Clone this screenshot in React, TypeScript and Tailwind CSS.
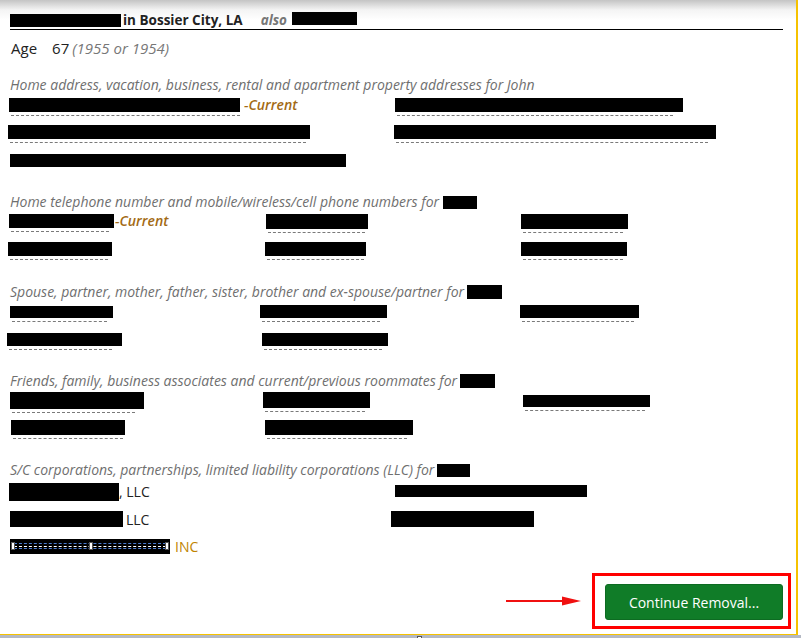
import React from "react";

type Cell = {
  w: string;
  h: string;
  uw?: string;
  ml?: string;
  suffix?: React.ReactNode;
};

const current = (
  <span className="italic font-semibold text-[14px] leading-[14px] text-[#a36a14] ml-[1px]">-Current</span>
);

const FONT = { fontFamily: '"Open Sans", "Noto Sans", Arial, sans-serif' };

function Black({ w, h }: { w: string; h: string }) {
  return <span className={`inline-block bg-black ${w} ${h}`} />;
}

function Item({ cell, pitch }: { cell: Cell; pitch: string }) {
  return (
    <div className={`flex flex-col items-start ${pitch} ${cell.ml ?? ""}`}>
      <div className={`flex items-center ${cell.h}`}>
        <Black w={cell.w} h={cell.h} />
        {cell.suffix}
      </div>
      {cell.uw && (
        <div className={`mt-[3px] ml-[2px] border-t border-dashed border-[#7a7a7a] ${cell.uw}`} />
      )}
    </div>
  );
}

function Heading({ children }: { children: React.ReactNode }) {
  return (
    <p className="flex items-center h-[18px] italic text-[14px] leading-[18px] text-[#6f6f6f]">
      {children}
    </p>
  );
}

const phone: Cell[] = [
  { w: "w-[105px]", h: "h-[14px]", uw: "w-[98px]", ml: "-ml-[1px]", suffix: current },
  { w: "w-[102px]", h: "h-[15px]", uw: "w-[97px]" },
  { w: "w-[107px]", h: "h-[15px]", uw: "w-[100px]" },
  { w: "w-[104px]", h: "h-[14px]", uw: "w-[98px]", ml: "-ml-[2px]" },
  { w: "w-[101px]", h: "h-[14px]", uw: "w-[97px]", ml: "-ml-[1px]" },
  { w: "w-[106px]", h: "h-[14px]", uw: "w-[100px]" },
];

const spouse: Cell[] = [
  { w: "w-[103px]", h: "h-[12px]", uw: "w-[95px]", ml: "pt-[1px]" },
  { w: "w-[127px]", h: "h-[13px]", uw: "w-[118px]" },
  { w: "w-[119px]", h: "h-[13px]", uw: "w-[112px]" },
  { w: "w-[115px]", h: "h-[13px]", uw: "w-[103px]", ml: "-ml-[3px]" },
  { w: "w-[126px]", h: "h-[13px]", uw: "w-[118px]", ml: "ml-[2px]" },
];

const friends: Cell[] = [
  { w: "w-[134px]", h: "h-[17px]", uw: "w-[123px]" },
  { w: "w-[107px]", h: "h-[16px]", uw: "w-[100px]" },
  { w: "w-[127px]", h: "h-[12px]", uw: "w-[120px]", ml: "pt-[3px]" },
  { w: "w-[114px]", h: "h-[15px]", uw: "w-[110px]", ml: "ml-[1px]" },
  { w: "w-[148px]", h: "h-[15px]", uw: "w-[140px]", ml: "ml-[2px]" },
];

export default function App() {
  return (
    <div className="w-[801px] h-[638px] bg-white overflow-hidden text-[#222]" style={FONT}>
      <div className="w-[798px] h-[635px] flex flex-col border-r-2 border-b border-[#f6c200] bg-[linear-gradient(to_bottom,#c4c4c4_0px,#f4f4f4_10px,#ffffff_20px)] pl-[10px] pr-[13px]">
        {/* Header */}
        <div className="mt-[11px] h-[19px] flex items-center border-b border-black text-[13.5px] font-bold">
          <Black w="w-[111px]" h="h-[13px]" />
          <span className="ml-[2px]">in Bossier City, LA</span>
          <span className="ml-[18px] italic text-[#777]">also</span>
          <span className="ml-[5px]">
            <Black w="w-[65px]" h="h-[13px]" />
          </span>
        </div>

        {/* Age */}
        <div className="mt-[8px] h-[20px] flex items-center text-[15px] leading-[20px]">
          <span className="ml-[1px]">Age</span>
          <span className="ml-[15px]">67</span>
          <span className="ml-[3px] italic text-[#777]">(1955 or 1954)</span>
        </div>

        {/* Addresses */}
        <div className="mt-[18px]">
          <Heading>
            Home address, vacation, business, rental and apartment property addresses for John
          </Heading>
          <div className="mt-[4px] grid grid-cols-[385px_1fr]">
            <Item pitch="h-[27px]" cell={{ w: "w-[231px]", h: "h-[14px]", uw: "w-[229px]", ml: "-ml-[1px]", suffix: <span className="ml-[3px] flex">{current}</span> }} />
            <Item pitch="h-[27px]" cell={{ w: "w-[288px]", h: "h-[14px]", uw: "w-[276px]" }} />
            <Item pitch="h-[29px]" cell={{ w: "w-[302px]", h: "h-[14px]", uw: "w-[296px]", ml: "-ml-[2px]" }} />
            <Item pitch="h-[29px]" cell={{ w: "w-[322px]", h: "h-[14px]", uw: "w-[312px]", ml: "-ml-[1px]" }} />
            <Item pitch="h-[27px]" cell={{ w: "w-[336px]", h: "h-[13px]" }} />
          </div>
        </div>

        {/* Phones */}
        <div className="mt-[12px]">
          <Heading>
            Home telephone number and mobile/wireless/cell phone numbers for
            <span className="ml-[4px] flex">
              <Black w="w-[34px]" h="h-[13px]" />
            </span>
          </Heading>
          <div className="mt-[3px] grid grid-cols-[256px_255px_1fr]">
            {phone.map((c, i) => (
              <Item key={i} pitch="h-[28px]" cell={c} />
            ))}
          </div>
        </div>

        {/* Relatives */}
        <div className="mt-[13px]">
          <Heading>
            Spouse, partner, mother, father, sister, brother and ex-spouse/partner for
            <span className="ml-[3px] flex">
              <Black w="w-[35px]" h="h-[14px]" />
            </span>
          </Heading>
          <div className="mt-[4px] grid grid-cols-[250px_260px_1fr]">
            {spouse.map((c, i) => (
              <Item key={i} pitch="h-[28px]" cell={c} />
            ))}
          </div>
        </div>

        {/* Associates */}
        <div className="mt-[11px]">
          <Heading>
            Friends, family, business associates and current/previous roommates for
            <span className="ml-[3px] flex">
              <Black w="w-[35px]" h="h-[14px]" />
            </span>
          </Heading>
          <div className="mt-[2px] grid grid-cols-[253px_260px_1fr]">
            {friends.map((c, i) => (
              <Item key={i} pitch="h-[28px]" cell={c} />
            ))}
          </div>
        </div>

        {/* Corporations */}
        <div className="mt-[13px]">
          <Heading>
            S/C corporations, partnerships, limited liability corporations (LLC) for
            <span className="ml-[3px] flex">
              <Black w="w-[33px]" h="h-[13px]" />
            </span>
          </Heading>
          <div className="mt-[4px] grid grid-cols-[385px_1fr] text-[14px] leading-[18px]">
            <div className="h-[28px] flex items-start -ml-[1px]">
              <Black w="w-[110px]" h="h-[18px]" />
              <span>, LLC</span>
            </div>
            <div className="h-[28px] flex items-start pt-[2px]">
              <Black w="w-[192px]" h="h-[12px]" />
            </div>
            <div className="h-[28px] flex items-start">
              <Black w="w-[113px]" h="h-[16px]" />
              <span className="ml-[3px]">LLC</span>
            </div>
            <div className="h-[28px] flex items-start -ml-[4px]">
              <Black w="w-[143px]" h="h-[16px]" />
            </div>
            <div className="h-[15px] flex items-center">
              <span className="relative inline-block w-[160px] h-[15px] bg-black">
                <span className="absolute left-[4px] right-[4px] top-[4px] h-[6px] border-y border-dashed border-[#4a7bd0]" />
                <span className="absolute left-[4px] right-[4px] top-[7px] border-t border-dashed border-white" />
                <span className="absolute left-[1px] top-[3px] w-[4px] h-[8px] bg-white border border-[#555]" />
                <span className="absolute left-[79px] top-[3px] w-[4px] h-[8px] bg-white border border-[#555]" />
                <span className="absolute right-[1px] top-[3px] w-[4px] h-[8px] bg-white border border-[#555]" />
              </span>
              <span className="ml-[5px] text-[#c08400]">INC</span>
            </div>
          </div>
        </div>

        {/* Action */}
        <div className="mt-[19px] -mr-[8px] flex items-center justify-end">
          <svg width="76" height="12" viewBox="0 0 76 12" className="mr-[10px]">
            <line x1="0" y1="6" x2="62" y2="6" stroke="#f01010" strokeWidth="2.2" />
            <path d="M56 1.5 L75 6 L56 10.5 Z" fill="#f01010" />
          </svg>
          <div className="border-[3px] border-[#ff0000] pl-[10px] pr-[5px] pt-[8px] pb-[6px]">
            <button className="w-[178px] h-[36px] rounded-[3px] bg-[#107c28] text-white text-[14px] border border-[#0d6b22]">
              Continue Removal...
            </button>
          </div>
        </div>
      </div>
      <div className="relative h-[3px] bg-[#b4b9c4]">
        <span className="absolute left-[417px] top-[1px] w-[5px] h-[5px] bg-white border border-[#555]" />
      </div>
    </div>
  );
}
